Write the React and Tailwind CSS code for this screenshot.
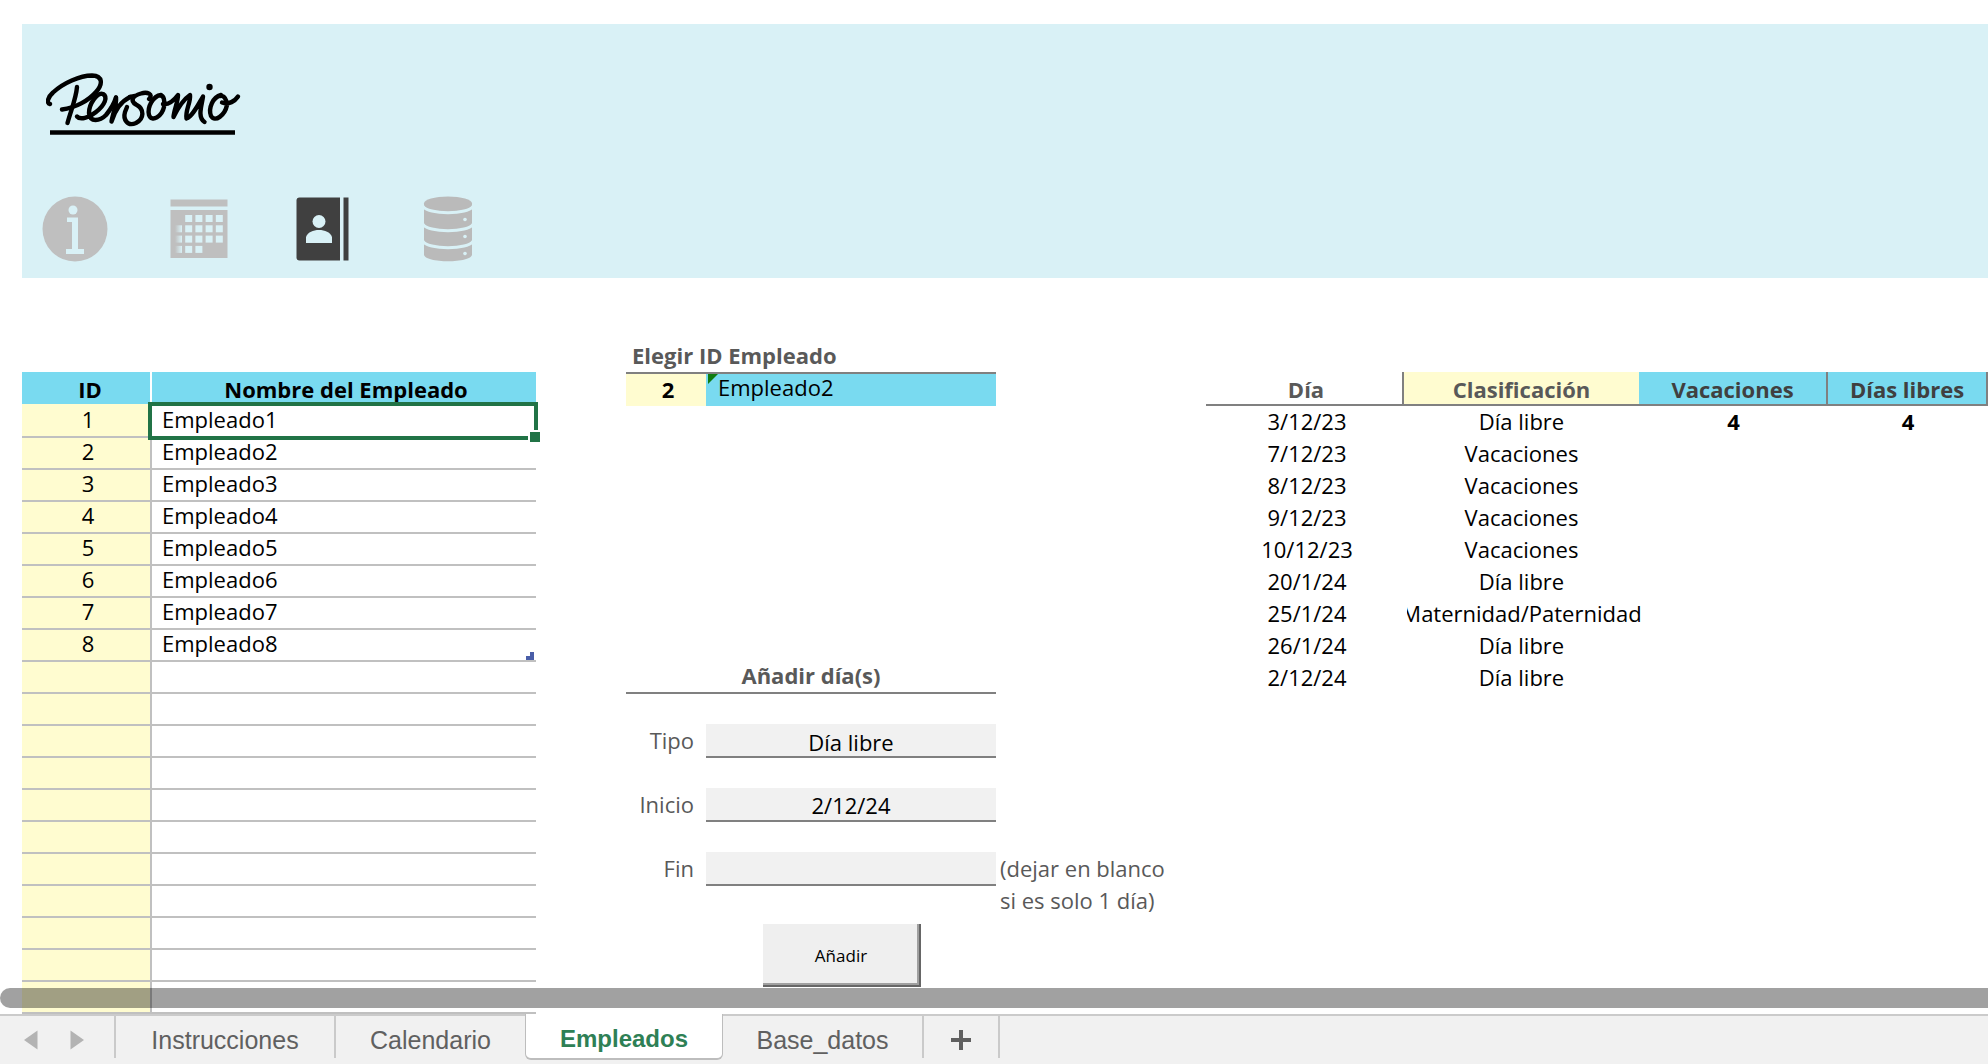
import { useState } from 'react';

const employees = ['Empleado1', 'Empleado2', 'Empleado3', 'Empleado4', 'Empleado5', 'Empleado6', 'Empleado7', 'Empleado8'];
const ROW_COUNT = 19;

const absences = [
    { date: '3/12/23', type: 'Día libre' },
    { date: '7/12/23', type: 'Vacaciones' },
    { date: '8/12/23', type: 'Vacaciones' },
    { date: '9/12/23', type: 'Vacaciones' },
    { date: '10/12/23', type: 'Vacaciones' },
    { date: '20/1/24', type: 'Día libre' },
    { date: '25/1/24', type: 'Maternidad/Paternidad' },
    { date: '26/1/24', type: 'Día libre' },
    { date: '2/12/24', type: 'Día libre' },
];

function Logo() {
    return (
        <svg width="196" height="66" viewBox="0 0 196 66" role="img" aria-label="Personio" fill="none" stroke="#000" strokeWidth="4.4" strokeLinecap="round" strokeLinejoin="round">
            <path d="M4 34 C0 33 2 27 7 22.500 C17 13 34 5.500 46 5.500 C57 6 57 14 50 22 C43 30 30 38 16 39.500" />
            <path d="M31 17 C30 29 25 40 21.500 53" />
            <path d="M31 46.500 C34 50 43 48 50 42 C59 35 62 27 57 24 C51 22 43 34 43 43 C44 53 54 51 60 45 C65 39 68 34 70 27.500" />
            <path d="M70 27.500 C71 34 67 43 65.500 51.500 C69 40 76 31 84 27" />
            <path d="M84 27 L89 26 M103 29 C108 24 101 21.500 95 23.500 C86 26 84 31 90 34.500 C99 39 98 49 90 53 C81 57 77 49 79 42 L81 37" />
            <path d="M115 25 C107 26 101 37 103 45 C106 53 116 46 118 37 C119 31 118 25 114 25.500 M117 34 C123 35 129 29 132 25 C132 32 128 40 127.500 47 C132 38 138 29 144 25 C145 32 139 41 140.500 48.500 C146 47 152 35 157 26.500 C156 35 151 47 158.500 52" />
            <path d="M175 25 C167 27 162 38 165 46 C169 53 179 45 181 35 C181 30 178 25 174 26 M176 32.500 C183 35 189 31 192 26.500" />
            <circle cx="163.500" cy="17" r="3.200" fill="#000" stroke="none" />
            <path d="M4 62.500 H189" strokeWidth="4.500" strokeLinecap="butt" />
        </svg>
    );
}

function InfoIcon() {
    return (
        <svg width="66" height="66" viewBox="0 0 66 66" aria-hidden="true">
            <circle cx="33" cy="33" r="32.500" fill="#bfbfbf" />
            <circle cx="31" cy="14" r="4.500" fill="#d9f1f6" />
            <path d="M25 21.500 H36 V53 H42 V58 H24 V53 H30 V26 H25 Z" fill="#d9f1f6" />
        </svg>
    );
}

function CalendarIcon() {
    const cells = [
        [1, 0], [2, 0], [3, 0], [4, 0],
        [0, 1], [1, 1], [2, 1], [3, 1], [4, 1],
        [0, 2], [1, 2], [2, 2], [3, 2], [4, 2],
        [0, 3], [1, 3], [2, 3],
    ];
    return (
        <svg width="60" height="66" viewBox="-1 0 60 66" aria-hidden="true">
            <defs>
                <linearGradient id="cell-fade">
                    <stop offset="0" stopColor="#bfbfbf" />
                    <stop offset="1" stopColor="#d9f1f6" />
                </linearGradient>
            </defs>
            <rect x="0.500" y="3.500" width="57" height="7" fill="#bfbfbf" />
            <rect x="0.500" y="14" width="57" height="48" fill="#bfbfbf" />
            {cells.map(([col, row]) => (
                <rect key={`${col}-${row}`} x={5 + col * 10.2} y={19 + row * 10.3} width="7" height="7" fill={col === 0 ? 'url(#cell-fade)' : '#d9f1f6'} />
            ))}
        </svg>
    );
}

function ContactsIcon() {
    return (
        <svg width="54" height="66" viewBox="0 0 54 66" aria-hidden="true">
            <path d="M3.500 1.500 H44 V64.500 H3.500 Q0.500 64.500 0.500 61.500 V4.500 Q0.500 1.500 3.500 1.500 Z" fill="#404040" />
            <rect x="47.500" y="1.500" width="5" height="63" fill="#404040" />
            <circle cx="23" cy="25.500" r="6.500" fill="#d9f1f6" />
            <path d="M10 47 V41 C12 36 17 34 23 34 C29 34 34 36 36 41 V47 Z" fill="#d9f1f6" />
        </svg>
    );
}

function DatabaseIcon() {
    return (
        <svg width="50" height="66" viewBox="0 0 50 66" aria-hidden="true">
            <path d="M1 7.500 V58.500 C1 67.500 49 67.500 49 58.500 V7.500 Z" fill="#bababa" />
            <path d="M0 10 C4 19 46 19 50 10 M0 28 C4 37 46 37 50 28 M0 45 C4 54 46 54 50 45" fill="none" stroke="#d9f1f6" strokeWidth="3" />
            <ellipse cx="25" cy="7.500" rx="24" ry="7" fill="#bababa" />
            <circle cx="42" cy="23.500" r="1.800" fill="#d9f1f6" />
            <circle cx="42" cy="40.500" r="1.800" fill="#d9f1f6" />
            <circle cx="42" cy="57.500" r="1.800" fill="#d9f1f6" />
        </svg>
    );
}

function EmployeeTable() {
    return (
        <table className="w-full table-fixed border-separate border-spacing-0 leading-6">
            <thead>
                <tr className="h-[34px]">
                    <th className="w-[130px] border-r-2 border-b-2 border-r-white border-b-[#fffcd0] bg-[#79daf0] p-0 pt-0.5 pl-2">ID</th>
                    <th className="border-b-2 border-white bg-[#79daf0] p-0 pt-0.5 pl-1">Nombre del Empleado</th>
                </tr>
            </thead>
            <tbody>
                {Array.from({ length: ROW_COUNT }, (_, i) => (
                    <tr key={i} className="h-8">
                        <td className="border-r-2 border-b-2 border-[#c0c0c0] bg-[#fffcd0] p-0 pb-1 pl-1 text-center">
                            {i < employees.length ? i + 1 : ''}
                        </td>
                        <td className="relative border-b-2 border-[#c0c0c0] p-0 pb-1 pl-2.5">
                            {employees[i]}
                            {i === 0 && (
                                <div className="absolute -inset-y-1 -right-0.5 -left-1 border-4 border-[#217346]">
                                    <div className="absolute -right-1.5 -bottom-1.5 size-3 border-t-2 border-l-2 border-white bg-[#217346]" />
                                </div>
                            )}
                            {i === employees.length - 1 && (
                                <svg className="absolute right-0.5 bottom-0" width="8" height="8" viewBox="0 0 8 8" aria-hidden="true">
                                    <path d="M4 0 H8 V8 H0 V4 H4 Z" fill="#4a5ea8" />
                                </svg>
                            )}
                        </td>
                    </tr>
                ))}
            </tbody>
        </table>
    );
}

function AddDaysForm() {
    const [selectedId, setSelectedId] = useState('2');
    const [type, setType] = useState('Día libre');
    const [start, setStart] = useState('2/12/24');
    const [end, setEnd] = useState('');
    const field = 'h-[34px] w-full appearance-none border-b-2 border-[#808080] bg-[#f1f1f1] pt-0.5 text-center text-black outline-none';

    return (
        <form className="pl-[90px] text-[#595959]" onSubmit={(e) => e.preventDefault()}>
            <div className="grid grid-cols-[80px_290px_1fr] leading-[30px]">
                <label htmlFor="employee-id" className="col-span-2 border-b-2 border-[#808080] pb-0.5 pl-1.5 font-bold">
                    Elegir ID Empleado
                </label>
                <input
                    id="employee-id"
                    value={selectedId}
                    onChange={(e) => setSelectedId(e.target.value)}
                    className="col-start-1 h-8 w-full bg-[#fffcd0] pb-0.5 pl-1 text-center font-bold text-black outline-none"
                />
                <output htmlFor="employee-id" className="relative h-8 bg-[#79daf0] pl-3 leading-[26px] text-black">
                    <svg className="absolute top-0 left-0.5" width="10" height="10" viewBox="0 0 10 10" aria-hidden="true">
                        <path d="M0 0 H10 L0 10 Z" fill="#107c10" />
                    </svg>
                    {employees[selectedId - 1]}
                </output>
            </div>

            <div className="mt-[254px] grid grid-cols-[80px_290px_1fr] gap-y-[30px] leading-8">
                <h2 className="col-span-2 border-b-2 border-[#808080] pb-0.5 text-center leading-[30px] font-bold">Añadir día(s)</h2>

                <label htmlFor="type" className="col-start-1 pr-3 text-right">Tipo</label>
                <select id="type" value={type} onChange={(e) => setType(e.target.value)} className={`${field} pb-0.5`}>
                    <option>Día libre</option>
                    <option>Vacaciones</option>
                    <option>Maternidad/Paternidad</option>
                </select>

                <label htmlFor="start" className="col-start-1 pr-3 text-right">Inicio</label>
                <input id="start" value={start} onChange={(e) => setStart(e.target.value)} className={field} />

                <label htmlFor="end" className="col-start-1 pr-3 text-right">Fin</label>
                <input id="end" value={end} onChange={(e) => setEnd(e.target.value)} className={field} />
                <p className="-mb-8 pl-1">
                    (dejar en blanco
                    <br />
                    si es solo 1 día)
                </p>
            </div>

            <button
                type="submit"
                className="mt-[38px] ml-[137px] h-[63px] w-[158px] border-r-2 border-b-2 border-[#666666] bg-[#efefef] pt-0.5 text-[17px] text-black shadow-[inset_-2px_-2px_0_#a0a0a0]"
            >
                Añadir
            </button>
        </form>
    );
}

function AbsenceTable() {
    return (
        <table className="w-full table-fixed border-separate border-spacing-0 leading-7">
            <thead className="text-[#595959]">
                <tr className="h-[34px]">
                    <th className="w-[198px] border-r-2 border-b-2 border-[#808080] p-0 pt-0.5 pl-1">Día</th>
                    <th className="w-[235px] border-b-2 border-[#808080] bg-[#fffcd0] p-0 pt-0.5">Clasificación</th>
                    <th className="w-[189px] border-r-2 border-b-2 border-[#808080] bg-[#79daf0] p-0 pt-0.5 text-[#404040]">Vacaciones</th>
                    <th className="border-r-2 border-b-2 border-[#808080] bg-[#79daf0] p-0 pt-0.5 text-[#404040]">Días libres</th>
                </tr>
            </thead>
            <tbody className="text-center">
                {absences.map(({ date, type }, i) => (
                    <tr key={date} className="h-8">
                        <td className="p-0 pb-0.5 pl-1">{date}</td>
                        <td className="p-0 pb-0.5">
                            <div className="flex justify-center [clip-path:inset(0_-8px_0_3px)]">{type}</div>
                        </td>
                        <td className="p-0 pb-0.5 font-bold">{i === 0 ? 4 : ''}</td>
                        <td className="p-0 pb-0.5 font-bold">{i === 0 ? 4 : ''}</td>
                    </tr>
                ))}
            </tbody>
        </table>
    );
}

function SheetTabs() {
    const tab = 'h-[42px] border-r-2 border-[#cacaca] pt-1.5 text-[25px] text-[#606060]';
    return (
        <nav className="flex h-[50px] items-start border-t-2 border-[#cbcbcb] bg-[#f1f1f1] font-['Liberation_Sans',sans-serif]">
            <div className="flex h-[42px] w-[116px] items-center gap-8 border-r-2 border-[#cacaca] pt-1.5 pl-6">
                <button type="button" aria-label="Hoja anterior">
                    <svg className="block" width="14" height="20" viewBox="0 0 14 20"><path d="M13.500 0.500 V19.500 L0 10 Z" fill="#b3b3b3" /></svg>
                </button>
                <button type="button" aria-label="Hoja siguiente">
                    <svg className="block" width="14" height="20" viewBox="0 0 14 20"><path d="M0.500 0.500 V19.500 L14 10 Z" fill="#b3b3b3" /></svg>
                </button>
            </div>
            <button type="button" className={`${tab} w-[220px]`}>Instrucciones</button>
            <button type="button" className="h-[42px] w-[189px] pt-1.5 text-[25px] text-[#606060]">Calendario</button>
            <button type="button" aria-current="page" className="-mt-0.5 h-[46px] w-[198px] rounded-b-md border-x border-b-2 border-[#bdbdbd] bg-white pt-1.5 text-2xl font-bold text-[#2e8055]">
                Empleados
            </button>
            <button type="button" className={`${tab} w-[201px]`}>Base_datos</button>
            <button type="button" aria-label="Nueva hoja" className={`${tab} flex w-[76px] items-center justify-center`}>
                <svg width="20" height="20" viewBox="0 0 20 20"><path d="M10 0 V20 M0 10 H20" stroke="#606060" strokeWidth="4" /></svg>
            </button>
        </nav>
    );
}

export default function App() {
    return (
        <div className="flex min-h-screen flex-col bg-white font-['Open_Sans',sans-serif] text-[22px] text-black">
            <main className="relative flex-1 overflow-hidden pt-6 pl-[22px]">
                <header className="h-[254px] bg-[#d9f1f6] pt-[46px] pl-5">
                    <div className="pl-1">
                        <Logo />
                    </div>
                    <div className="mt-[60px] flex">
                        <a href="#instrucciones" aria-label="Instrucciones" className="w-[127px]"><InfoIcon /></a>
                        <a href="#calendario" aria-label="Calendario" className="w-[127px]"><CalendarIcon /></a>
                        <a href="#empleados" aria-label="Empleados" className="w-[127px]"><ContactsIcon /></a>
                        <a href="#base-datos" aria-label="Base de datos" className="w-[127px]"><DatabaseIcon /></a>
                    </div>
                </header>

                <div className="grid grid-cols-[514fr_670fr_782fr] pt-[62px]">
                    <div className="pt-8">
                        <EmployeeTable />
                    </div>
                    <AddDaysForm />
                    <div className="pt-8">
                        <AbsenceTable />
                    </div>
                </div>

                {/* Horizontal scrollbar thumb */}
                <div className="absolute inset-x-0 bottom-1.5 h-5 rounded-l-full bg-black/37" />
            </main>
            <SheetTabs />
        </div>
    );
}
